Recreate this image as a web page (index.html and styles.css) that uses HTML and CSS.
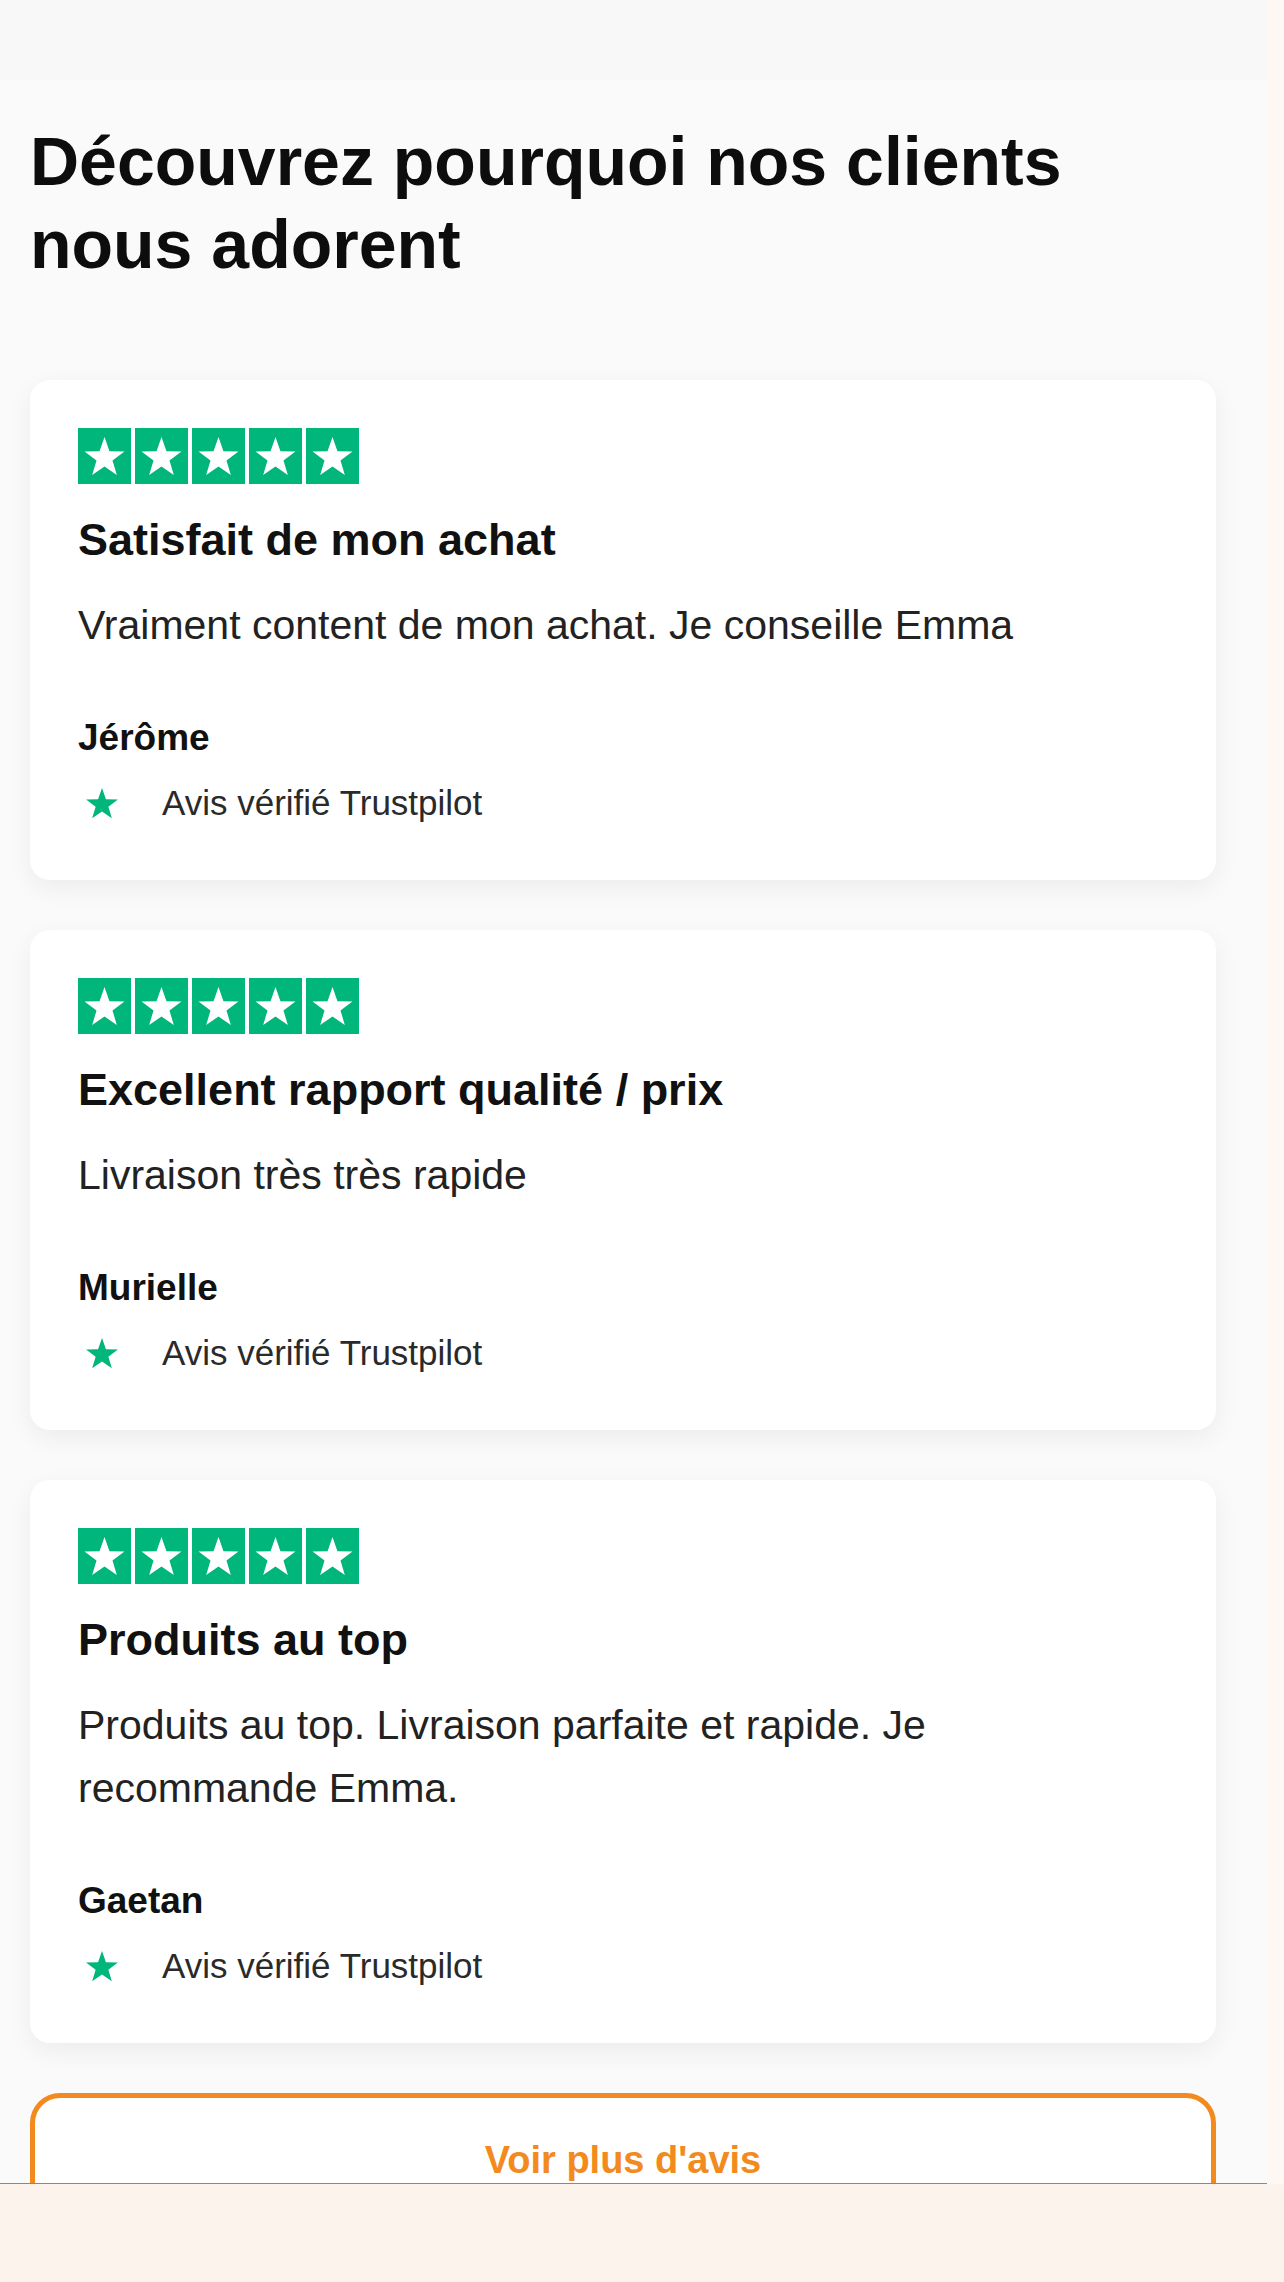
FILE: index.html
```html
<!DOCTYPE html>
<html lang="fr">
<head>
<meta charset="utf-8">
<title>Avis clients</title>
<link rel="stylesheet" href="styles.css">
</head>
<body>
<div class="page">
  <div class="viewport">
    <main class="content">
      <div class="topband"></div>
      <section class="reviews">
        <h1 class="heading">Découvrez pourquoi nos clients nous adorent</h1>

        <article class="card">
          <div class="stars">
            <svg class="star-box" viewBox="0 0 53 56"><rect width="53" height="56" fill="#00b67a"/><polygon fill="#fff" points="26.5,9 31.44,23.2 46.47,23.51 34.49,32.6 38.84,46.99 26.5,38.4 14.16,46.99 18.51,32.6 6.53,23.51 21.56,23.2"/></svg>
            <svg class="star-box" viewBox="0 0 53 56"><rect width="53" height="56" fill="#00b67a"/><polygon fill="#fff" points="26.5,9 31.44,23.2 46.47,23.51 34.49,32.6 38.84,46.99 26.5,38.4 14.16,46.99 18.51,32.6 6.53,23.51 21.56,23.2"/></svg>
            <svg class="star-box" viewBox="0 0 53 56"><rect width="53" height="56" fill="#00b67a"/><polygon fill="#fff" points="26.5,9 31.44,23.2 46.47,23.51 34.49,32.6 38.84,46.99 26.5,38.4 14.16,46.99 18.51,32.6 6.53,23.51 21.56,23.2"/></svg>
            <svg class="star-box" viewBox="0 0 53 56"><rect width="53" height="56" fill="#00b67a"/><polygon fill="#fff" points="26.5,9 31.44,23.2 46.47,23.51 34.49,32.6 38.84,46.99 26.5,38.4 14.16,46.99 18.51,32.6 6.53,23.51 21.56,23.2"/></svg>
            <svg class="star-box" viewBox="0 0 53 56"><rect width="53" height="56" fill="#00b67a"/><polygon fill="#fff" points="26.5,9 31.44,23.2 46.47,23.51 34.49,32.6 38.84,46.99 26.5,38.4 14.16,46.99 18.51,32.6 6.53,23.51 21.56,23.2"/></svg>
          </div>
          <h2 class="title">Satisfait de mon achat</h2>
          <p class="body">Vraiment content de mon achat. Je conseille Emma</p>
          <p class="name">Jérôme</p>
          <div class="verified">
            <svg class="mini-star" viewBox="0 0 40 37"><polygon fill="#00b67a" points="20,0 24.7,13.53 39.02,13.82 27.61,22.47 31.76,36.18 20,28 8.24,36.18 12.39,22.47 0.98,13.82 15.3,13.53"/></svg>
            <span class="verified-text">Avis vérifié Trustpilot</span>
          </div>
        </article>

        <article class="card">
          <div class="stars">
            <svg class="star-box" viewBox="0 0 53 56"><rect width="53" height="56" fill="#00b67a"/><polygon fill="#fff" points="26.5,9 31.44,23.2 46.47,23.51 34.49,32.6 38.84,46.99 26.5,38.4 14.16,46.99 18.51,32.6 6.53,23.51 21.56,23.2"/></svg>
            <svg class="star-box" viewBox="0 0 53 56"><rect width="53" height="56" fill="#00b67a"/><polygon fill="#fff" points="26.5,9 31.44,23.2 46.47,23.51 34.49,32.6 38.84,46.99 26.5,38.4 14.16,46.99 18.51,32.6 6.53,23.51 21.56,23.2"/></svg>
            <svg class="star-box" viewBox="0 0 53 56"><rect width="53" height="56" fill="#00b67a"/><polygon fill="#fff" points="26.5,9 31.44,23.2 46.47,23.51 34.49,32.6 38.84,46.99 26.5,38.4 14.16,46.99 18.51,32.6 6.53,23.51 21.56,23.2"/></svg>
            <svg class="star-box" viewBox="0 0 53 56"><rect width="53" height="56" fill="#00b67a"/><polygon fill="#fff" points="26.5,9 31.44,23.2 46.47,23.51 34.49,32.6 38.84,46.99 26.5,38.4 14.16,46.99 18.51,32.6 6.53,23.51 21.56,23.2"/></svg>
            <svg class="star-box" viewBox="0 0 53 56"><rect width="53" height="56" fill="#00b67a"/><polygon fill="#fff" points="26.5,9 31.44,23.2 46.47,23.51 34.49,32.6 38.84,46.99 26.5,38.4 14.16,46.99 18.51,32.6 6.53,23.51 21.56,23.2"/></svg>
          </div>
          <h2 class="title">Excellent rapport qualité / prix</h2>
          <p class="body">Livraison très très rapide</p>
          <p class="name">Murielle</p>
          <div class="verified">
            <svg class="mini-star" viewBox="0 0 40 37"><polygon fill="#00b67a" points="20,0 24.7,13.53 39.02,13.82 27.61,22.47 31.76,36.18 20,28 8.24,36.18 12.39,22.47 0.98,13.82 15.3,13.53"/></svg>
            <span class="verified-text">Avis vérifié Trustpilot</span>
          </div>
        </article>

        <article class="card">
          <div class="stars">
            <svg class="star-box" viewBox="0 0 53 56"><rect width="53" height="56" fill="#00b67a"/><polygon fill="#fff" points="26.5,9 31.44,23.2 46.47,23.51 34.49,32.6 38.84,46.99 26.5,38.4 14.16,46.99 18.51,32.6 6.53,23.51 21.56,23.2"/></svg>
            <svg class="star-box" viewBox="0 0 53 56"><rect width="53" height="56" fill="#00b67a"/><polygon fill="#fff" points="26.5,9 31.44,23.2 46.47,23.51 34.49,32.6 38.84,46.99 26.5,38.4 14.16,46.99 18.51,32.6 6.53,23.51 21.56,23.2"/></svg>
            <svg class="star-box" viewBox="0 0 53 56"><rect width="53" height="56" fill="#00b67a"/><polygon fill="#fff" points="26.5,9 31.44,23.2 46.47,23.51 34.49,32.6 38.84,46.99 26.5,38.4 14.16,46.99 18.51,32.6 6.53,23.51 21.56,23.2"/></svg>
            <svg class="star-box" viewBox="0 0 53 56"><rect width="53" height="56" fill="#00b67a"/><polygon fill="#fff" points="26.5,9 31.44,23.2 46.47,23.51 34.49,32.6 38.84,46.99 26.5,38.4 14.16,46.99 18.51,32.6 6.53,23.51 21.56,23.2"/></svg>
            <svg class="star-box" viewBox="0 0 53 56"><rect width="53" height="56" fill="#00b67a"/><polygon fill="#fff" points="26.5,9 31.44,23.2 46.47,23.51 34.49,32.6 38.84,46.99 26.5,38.4 14.16,46.99 18.51,32.6 6.53,23.51 21.56,23.2"/></svg>
          </div>
          <h2 class="title">Produits au top</h2>
          <p class="body">Produits au top. Livraison parfaite et rapide. Je<br>recommande Emma.</p>
          <p class="name">Gaetan</p>
          <div class="verified">
            <svg class="mini-star" viewBox="0 0 40 37"><polygon fill="#00b67a" points="20,0 24.7,13.53 39.02,13.82 27.61,22.47 31.76,36.18 20,28 8.24,36.18 12.39,22.47 0.98,13.82 15.3,13.53"/></svg>
            <span class="verified-text">Avis vérifié Trustpilot</span>
          </div>
        </article>

        <button class="more-btn" type="button">Voir plus d'avis</button>
      </section>
    </main>
    <div class="edge"></div>
  </div>
  <div class="bottom-bar"></div>
</div>
</body>
</html>
```

FILE: styles.css
```css
* {
  box-sizing: border-box;
}

html, body {
  margin: 0;
  padding: 0;
}

body {
  font-family: "Liberation Sans", Arial, sans-serif;
  color: #111;
  background: #fbf3ec;
}

.page {
  display: flex;
  flex-direction: column;
  width: 1284px;
  height: 2282px;
}

.viewport {
  display: flex;
  height: 2184px;
  flex: none;
}

.content {
  width: 1267px;
  flex: none;
  height: 2184px;
  overflow: hidden;
  background: #fafafa;
  border-bottom: 1px solid #8d8884;
}

.edge {
  flex: 1;
  background: #fdf8f4;
}

.bottom-bar {
  flex: 1;
  background: #fbf3ec;
}

.topband {
  height: 80px;
  background: #f8f8f8;
}

.reviews {
  display: flex;
  flex-direction: column;
  padding: 40px 51px 0 30px;
}

.heading {
  margin: 0 0 94px;
  font-size: 68px;
  line-height: 83px;
  font-weight: 700;
  color: #0d0d0d;
  letter-spacing: 0;
}

.card {
  background: #ffffff;
  border-radius: 20px;
  padding: 48px 48px 57px;
  margin-bottom: 50px;
  box-shadow: 0 8px 26px rgba(0, 0, 0, 0.06);
  display: flex;
  flex-direction: column;
  align-items: flex-start;
}

.stars {
  display: flex;
  gap: 4px;
  margin-bottom: 29px;
}

.star-box {
  width: 53px;
  height: 56px;
  display: block;
}

.title {
  margin: 0 0 27px;
  font-size: 45px;
  line-height: 54px;
  font-weight: 700;
  color: #111;
}

.body {
  margin: 0 0 59px;
  font-size: 41px;
  line-height: 63px;
  color: #222;
}

.name {
  margin: 0 0 23px;
  font-size: 37px;
  line-height: 44px;
  font-weight: 700;
  color: #111;
}

.verified {
  display: flex;
  align-items: center;
  height: 40px;
}

.mini-star {
  width: 34px;
  height: 31px;
  margin-left: 7px;
  margin-right: 43px;
  display: block;
}

.verified-text {
  font-size: 35px;
  line-height: 40px;
  color: #2a2a2a;
}

.more-btn {
  display: block;
  width: 100%;
  padding: 39px 0 43px;
  background: #ffffff;
  border: 5px solid #f28a1e;
  border-radius: 30px;
  font-family: "Liberation Sans", Arial, sans-serif;
  font-size: 38px;
  line-height: 46px;
  font-weight: 700;
  color: #f28a1e;
  text-align: center;
}
```
